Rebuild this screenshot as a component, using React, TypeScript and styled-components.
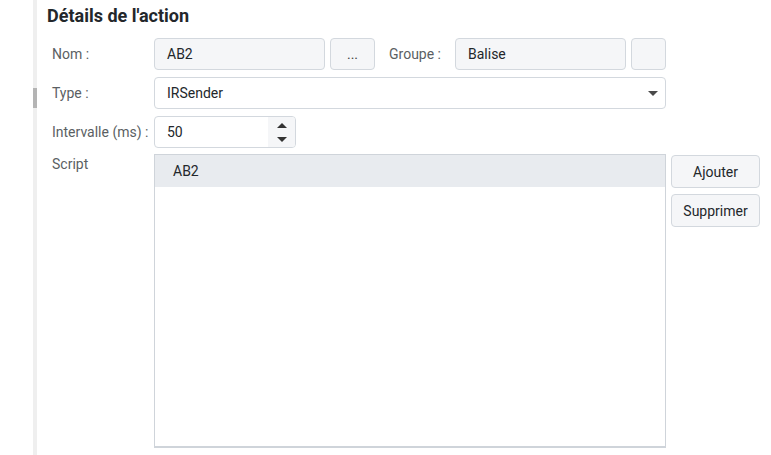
import React from "react";
import styled, { createGlobalStyle } from "styled-components";

const Global = createGlobalStyle`
  html, body { margin: 0; padding: 0; background: #fff; }
  body { font-family: Roboto, "Liberation Sans", sans-serif; overflow: hidden; }
  * { box-sizing: border-box; }
`;

const Page = styled.div`
  display: flex;
  height: 455px;
  width: 771px;
  padding-left: 33px;
`;

const Splitter = styled.div`
  position: relative;
  width: 4px;
  background: #efefef;
  flex: none;
`;

const SplitterThumb = styled.div`
  position: absolute;
  left: 0;
  top: 88px;
  width: 4px;
  height: 20px;
  background: #b4b4b4;
`;

const Content = styled.div`
  flex: 1;
  display: flex;
  flex-direction: column;
  padding: 5px 11px 7px 10px;
`;

const Title = styled.h2`
  margin: 0 0 11px 0;
  font-size: 18px;
  font-weight: 700;
  color: #23272b;
  line-height: 22px;
`;

const Form = styled.div`
  display: grid;
  grid-template-columns: 102px 512px auto;
  column-gap: 5px;
  row-gap: 7px;
  flex: 1;
  grid-template-rows: 32px 32px 32px 1fr;
`;

const Label = styled.div<{ $top?: boolean }>`
  font-size: 14px;
  color: #5b5f63;
  padding-left: 5px;
  display: flex;
  align-items: ${(p) => (p.$top ? "flex-start" : "center")};
  padding-top: ${(p) => (p.$top ? "1px" : "0")};
  white-space: nowrap;
`;

const FieldRow = styled.div`
  display: flex;
  align-items: stretch;
  gap: 5px;
`;

const TextBox = styled.div<{ $w?: number; $white?: boolean }>`
  width: ${(p) => (p.$w ? `${p.$w}px` : "auto")};
  flex: ${(p) => (p.$w ? "none" : "1")};
  border: 1px solid #d3d8de;
  border-radius: 4px;
  background: ${(p) => (p.$white ? "#fff" : "#f5f6f8")};
  font-size: 14px;
  color: #23272b;
  display: flex;
  align-items: center;
  padding-left: 12px;
  position: relative;
`;

const SmallButton = styled.div<{ $w: number }>`
  width: ${(p) => p.$w}px;
  flex: none;
  border: 1px solid #d3d8de;
  border-radius: 4px;
  background: #f5f6f8;
  font-size: 14px;
  color: #444;
  display: flex;
  align-items: center;
  justify-content: center;
`;

const InlineLabel = styled.div`
  font-size: 14px;
  color: #5b5f63;
  display: flex;
  align-items: center;
  padding: 0 9px;
  width: 70px;
  flex: none;
  white-space: nowrap;
`;

const Caret = styled.div`
  position: absolute;
  right: 7px;
  top: 13px;
  width: 0;
  height: 0;
  border-left: 5px solid transparent;
  border-right: 5px solid transparent;
  border-top: 5px solid #4a4a4a;
`;

const Spin = styled.div`
  width: 142px;
  border: 1px solid #d3d8de;
  border-radius: 4px;
  background: #fff;
  display: flex;
  overflow: hidden;
`;

const SpinValue = styled.div`
  flex: 1;
  font-size: 14px;
  color: #23272b;
  display: flex;
  align-items: center;
  padding-left: 12px;
`;

const SpinButtons = styled.div`
  width: 27px;
  background: #f5f6f8;
  display: flex;
  flex-direction: column;
  align-items: center;
  justify-content: center;
  gap: 9px;
`;

const Arrow = styled.div<{ $up?: boolean }>`
  width: 0;
  height: 0;
  border-left: 5px solid transparent;
  border-right: 5px solid transparent;
  ${(p) =>
    p.$up ? "border-bottom: 5px solid #333;" : "border-top: 5px solid #333;"}
`;

const ListBox = styled.div`
  border: 1px solid #cfd4da;
  border-bottom-width: 2px;
  background: #fff;
  margin-top: -1px;
`;

const ListItem = styled.div<{ $selected?: boolean }>`
  height: 32px;
  display: flex;
  align-items: center;
  padding-left: 18px;
  font-size: 14px;
  color: #23272b;
  background: ${(p) => (p.$selected ? "#e8ebef" : "transparent")};
`;

const SideButtons = styled.div`
  display: flex;
  flex-direction: column;
  gap: 6px;
`;

const ActionButton = styled.div`
  width: 89px;
  height: 33px;
  border: 1px solid #d3d8de;
  border-radius: 4px;
  background: #f5f6f8;
  font-size: 14px;
  color: #23272b;
  display: flex;
  align-items: center;
  justify-content: center;
`;

const Empty = styled.div``;

export default function App() {
  return (
    <>
      <Global />
      <Page>
        <Splitter>
          <SplitterThumb />
        </Splitter>
        <Content>
          <Title>Détails de l'action</Title>
          <Form>
            <Label>Nom :</Label>
            <FieldRow>
              <TextBox $w={171}>AB2</TextBox>
              <SmallButton $w={45}>...</SmallButton>
              <InlineLabel>Groupe :</InlineLabel>
              <TextBox $w={171}>Balise</TextBox>
              <SmallButton $w={35} />
            </FieldRow>
            <Empty />

            <Label>Type :</Label>
            <TextBox $white>
              IRSender
              <Caret />
            </TextBox>
            <Empty />

            <Label>Intervalle (ms) :</Label>
            <FieldRow>
              <Spin>
                <SpinValue>50</SpinValue>
                <SpinButtons>
                  <Arrow $up />
                  <Arrow />
                </SpinButtons>
              </Spin>
            </FieldRow>
            <Empty />

            <Label $top>Script</Label>
            <ListBox>
              <ListItem $selected>AB2</ListItem>
            </ListBox>
            <SideButtons>
              <ActionButton>Ajouter</ActionButton>
              <ActionButton>Supprimer</ActionButton>
            </SideButtons>
          </Form>
        </Content>
      </Page>
    </>
  );
}
